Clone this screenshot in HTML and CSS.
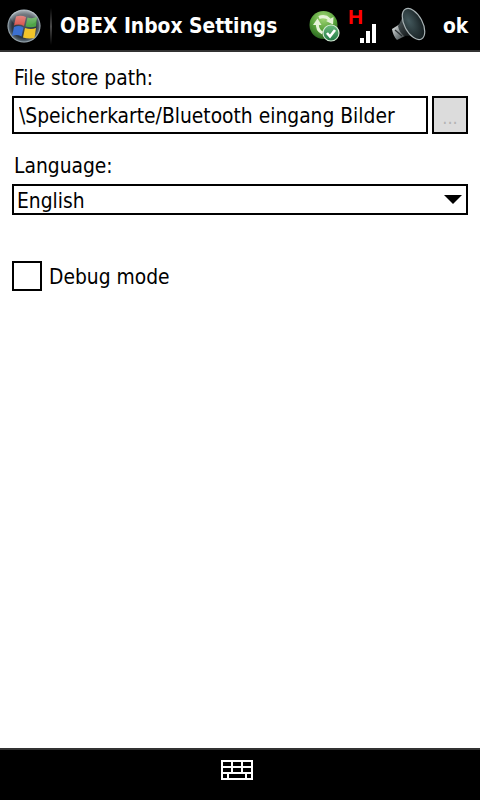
FILE: index.html
```html
<!DOCTYPE html>
<html>
<head>
    <meta charset="utf-8">
    <title>OBEX Inbox Settings</title>
    <link rel="stylesheet" href="styles.css">
</head>
<body>
    <div class="top-bar">
        <svg class="start-orb" width="36" height="36" viewBox="0 0 36 36">
            <defs>
                <radialGradient id="orbfill" cx="50%" cy="50%" r="50%">
                    <stop offset="0%" stop-color="#46525e"/>
                    <stop offset="72%" stop-color="#2c3640"/>
                    <stop offset="90%" stop-color="#55636e"/>
                    <stop offset="100%" stop-color="#b4c2ca"/>
                </radialGradient>
                <linearGradient id="orbshine" x1="0" y1="0" x2="0" y2="1">
                    <stop offset="0%" stop-color="#fff" stop-opacity=".45"/>
                    <stop offset="100%" stop-color="#fff" stop-opacity="0"/>
                </linearGradient>
                <filter id="soft"><feGaussianBlur stdDeviation=".5"/></filter>
            </defs>
            <circle cx="18" cy="18" r="16.500" fill="url(#orbfill)"/>
            <g filter="url(#soft)">
                <path d="M10 8.500 Q15 7 20 9 L18 18 Q13 15.500 8 17.500 Z" fill="#d8544e"/>
                <path d="M21.500 9.500 Q26 11 31 9 L30 18.500 Q25 20 19.500 18.500 Z" fill="#4fa447"/>
                <path d="M8 19 Q13 17 17.500 19.500 L15.500 28.500 Q11 26 6 28 Z" fill="#3a6fd2"/>
                <path d="M19 20 Q25 22 30 20 L28.500 30 Q22 31 17 29.500 Z" fill="#f2c42c"/>
            </g>
            <ellipse cx="18" cy="10" rx="13" ry="8" fill="url(#orbshine)"/>
        </svg>
        <div class="divider"></div>
        <h1>OBEX Inbox Settings</h1>
        <svg class="tray-sync" width="31" height="32" viewBox="0 0 31 32">
            <defs>
                <radialGradient id="syncfill" cx="50%" cy="25%" r="80%">
                    <stop offset="0%" stop-color="#a4d878"/>
                    <stop offset="55%" stop-color="#559f38"/>
                    <stop offset="100%" stop-color="#235c1c"/>
                </radialGradient>
                <linearGradient id="badgefill" x1="0" y1="0" x2="0" y2="1">
                    <stop offset="0%" stop-color="#6cbb7c"/>
                    <stop offset="100%" stop-color="#217a46"/>
                </linearGradient>
            </defs>
            <circle cx="14.500" cy="15" r="14" fill="url(#syncfill)"/>
            <path d="M10 7.500 Q16 5 20.500 9.500" fill="none" stroke="#e6f3d8" stroke-width="3"/>
            <path d="M24.500 7 L24 14.500 L17 11 Z" fill="#e6f3d8"/>
            <path d="M8.500 13 Q7.500 20 13.500 23" fill="none" stroke="#e6f3d8" stroke-width="3"/>
            <path d="M4 15 L8.500 8.500 L12.500 15 Z" fill="#e6f3d8"/>
            <circle cx="22" cy="23" r="8" fill="url(#badgefill)" stroke="#d4ead4" stroke-width="1.200"/>
            <path d="M18 23 L21 26.500 L26 20" fill="none" stroke="#fff" stroke-width="2.600"/>
        </svg>
        <div class="tray-signal">
            <span class="signal-h">H</span>
            <div class="bars">
                <i class="bar-1"></i>
                <i class="bar-2"></i>
                <i class="bar-3"></i>
            </div>
        </div>
        <svg class="tray-sound" width="40" height="40" viewBox="0 0 40 40">
            <defs>
                <linearGradient id="conefill" x1="0" y1="0" x2="1" y2="1">
                    <stop offset="0%" stop-color="#5f6a6c"/>
                    <stop offset="60%" stop-color="#1c2224"/>
                    <stop offset="100%" stop-color="#101415"/>
                </linearGradient>
                <radialGradient id="facefill" cx="35%" cy="35%" r="75%">
                    <stop offset="0%" stop-color="#44595d"/>
                    <stop offset="100%" stop-color="#121a1c"/>
                </radialGradient>
                <linearGradient id="backfill" x1="0" y1="0" x2="1" y2="1">
                    <stop offset="0%" stop-color="#f0f2f2"/>
                    <stop offset="55%" stop-color="#7f8789"/>
                    <stop offset="100%" stop-color="#333a3c"/>
                </linearGradient>
            </defs>
            <path d="M4 23 L12 18 L17 30 L9 34 Q5 30 4 23 Z" fill="url(#backfill)"/>
            <path d="M7 24 L14 30" stroke="#2a3032" stroke-width="1.200"/>
            <path d="M16 5 Q14 14 10 20 Q11 26 16 30 Q25 29 33 33 Z" fill="url(#conefill)"/>
            <ellipse cx="25.500" cy="18" rx="9" ry="17" transform="rotate(-28 25.500 18)" fill="url(#facefill)" stroke="#aab4b6" stroke-width="1.200"/>
        </svg>
        <span class="softkey-ok">ok</span>
    </div>

    <div class="content">
        <label class="field-label" for="storepath">File store path:</label>
        <div class="path-row">
            <input class="path-input" type="text" id="storepath" value="\Speicherkarte/Bluetooth eingang Bilder">
            <button class="browse" disabled>...</button>
        </div>

        <div class="field-label language-label">Language:</div>
        <div class="combo">
            <span class="combo-text">English</span>
            <div class="combo-arrow"></div>
        </div>

        <label class="debug-row">
            <span class="checkbox"></span>
            <span class="debug-text">Debug mode</span>
        </label>
    </div>

    <div class="bottom-bar">
        <svg class="keyboard" width="32" height="20" viewBox="0 0 32 20">
            <path d="M1 1 H31 V19 H1 Z M1 7 H31 M1 13 H31 M11 1 V13 M21 1 V13 M7 13 V19 M25 13 V19" fill="none" stroke="#fff" stroke-width="2"/>
        </svg>
    </div>
</body>
</html>
```

FILE: styles.css
```css
html, body {
    height: 100%;
}
body {
    margin: 0;
    background-color: white;
    color: black;
    font-family: "DejaVu Sans Condensed", "DejaVu Sans", sans-serif;
    display: flex;
    flex-direction: column;
    overflow: hidden;
}
.top-bar {
    height: 50px;
    background-color: black;
    border-bottom: 2px solid #333;
    color: white;
    display: flex;
    align-items: center;
}
.start-orb {
    margin-left: 6px;
    margin-top: 2px;
}
.divider {
    width: 2px;
    height: 37px;
    margin-left: 8px;
    margin-top: 3px;
    background: linear-gradient(#000, #4a4a4a 50%, #000);
}
h1 {
    margin: 2px 0 0 8px;
    font-size: 20.8px;
    font-weight: bold;
    flex: 1;
    white-space: nowrap;
}
.tray-sync {
    margin-right: 9px;
    margin-top: 2px;
}
.tray-signal {
    width: 28px;
    height: 34px;
    margin-top: 2px;
    position: relative;
}
.signal-h {
    display: block;
    color: #f00;
    font-family: "Liberation Sans", sans-serif;
    font-weight: bold;
    font-size: 21px;
    line-height: 14px;
    margin-top: 1px;
    margin-left: -1px;
}
.bars {
    position: absolute;
    left: 11px;
    bottom: 0;
    display: flex;
    align-items: flex-end;
    gap: 2px;
}
.bars i {
    display: block;
    width: 4px;
    background-color: white;
}
.bar-1 {
    height: 5px;
}
.bar-2 {
    height: 12px;
}
.bar-3 {
    height: 19px;
}
.tray-sound {
    margin-left: 11px;
    margin-top: 2px;
}
.softkey-ok {
    width: 37px;
    margin-left: 15px;
    margin-top: 2px;
    font-size: 20.8px;
    font-weight: bold;
}
.content {
    flex: 1;
    padding: 14px 12px 0;
}
.field-label {
    display: block;
    font-size: 20.8px;
    line-height: 24px;
    padding-left: 2px;
}
.path-row {
    display: flex;
    gap: 4px;
    margin-top: 6px;
}
.path-input {
    flex: 1;
    min-width: 0;
    height: 38px;
    box-sizing: border-box;
    border: 2px solid black;
    border-radius: 0;
    padding: 2px 5px 0;
    font: inherit;
    font-size: 20.8px;
    color: black;
    outline: none;
}
.browse {
    width: 36px;
    height: 38px;
    border: 2px solid black;
    border-radius: 0;
    background-color: #dcdcdc;
    color: #b4b4b4;
    font: inherit;
    font-size: 18px;
    padding: 4px 0 0;
}
.language-label {
    margin-top: 20px;
}
.combo {
    margin-top: 6px;
    height: 31px;
    box-sizing: border-box;
    border: 2px solid black;
    display: flex;
    align-items: center;
    justify-content: space-between;
    padding: 0 4px 0 3px;
    font-size: 20.8px;
}
.combo-text {
    margin-top: 2px;
}
.combo-arrow {
    width: 0;
    height: 0;
    border-left: 9px solid transparent;
    border-right: 9px solid transparent;
    border-top: 9px solid black;
}
.debug-row {
    display: flex;
    align-items: center;
    gap: 7px;
    margin-top: 46px;
    font-size: 20.8px;
}
.debug-text {
    margin-top: 2px;
}
.checkbox {
    width: 30px;
    height: 30px;
    box-sizing: border-box;
    border: 2px solid black;
}
.bottom-bar {
    height: 52px;
    background-color: black;
    border-top: 2px solid #333;
    display: flex;
    justify-content: center;
    padding-top: 10px;
    box-sizing: border-box;
}
.keyboard {
    margin-right: 6px;
}
```
